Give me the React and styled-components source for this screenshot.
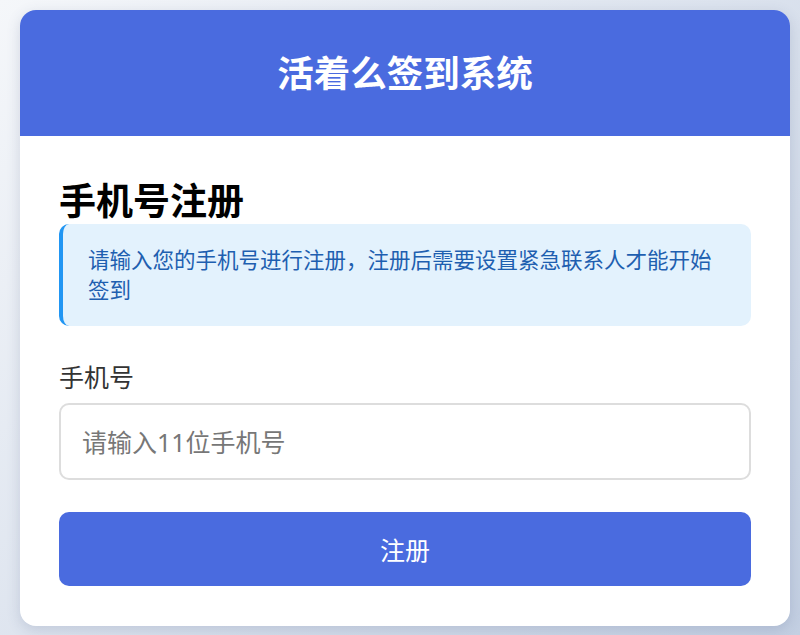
import styled, { createGlobalStyle } from 'styled-components'

const GlobalStyle = createGlobalStyle`
html, body {
  margin: 0;
  padding: 0;
  min-height: 100%;
}
body {
  font-family: "Noto Sans", "Noto Sans CJK SC", sans-serif;
  background: linear-gradient(135deg, #f5f7fa 0%, #c3cfe2 100%);
  min-height: 635px;
}
* { box-sizing: border-box; }
`

const Page = styled.div`
padding: 10px 10px 9px 20px;
`

const Card = styled.div`
width: 770px;
background: #fff;
border-radius: 16px;
overflow: hidden;
box-shadow: 0 4px 14px rgba(60, 80, 120, 0.18);
`

const Header = styled.header`
height: 126px;
background: #4a6bdf;
display: flex;
align-items: center;
justify-content: center;
`

const Title = styled.h1`
margin: 0;
color: #fff;
font-size: 36.5px;
font-weight: 700;
line-height: 1;
`

const Body = styled.div`
padding: 41px 39px 40px;
display: flex;
flex-direction: column;
`

const Heading = styled.h2`
margin: 0;
font-size: 37px;
font-weight: 700;
line-height: 47px;
color: #000;
`

const Notice = styled.div`
background: #e3f2fd;
border-left: 4px solid #2196f3;
border-radius: 10px;
padding: 21px 30px 21px 25px;
color: #1e5fb0;
font-size: 21.5px;
line-height: 30px;
`

const Field = styled.div`
margin-top: 35px;
display: flex;
flex-direction: column;
gap: 10px;
`

const Label = styled.label`
font-size: 25px;
line-height: 32px;
color: #333;
`

const Input = styled.input`
height: 77px;
border: 2px solid #ddd;
border-radius: 10px;
padding: 0 21px;
font-size: 25px;
font-family: inherit;
color: #333;
outline: none;
&::placeholder {
  color: #777;
}
`

const Button = styled.button`
margin-top: 32px;
height: 74px;
border: none;
border-radius: 10px;
background: #4a6bdf;
color: #fff;
font-size: 25px;
font-family: inherit;
cursor: pointer;
`

export default function App() {
  return (
    <>
      <GlobalStyle />
      <Page>
        <Card>
          <Header>
            <Title>活着么签到系统</Title>
          </Header>
          <Body>
            <Heading>手机号注册</Heading>
            <Notice>请输入您的手机号进行注册，注册后需要设置紧急联系人才能开始签到</Notice>
            <Field>
              <Label htmlFor="phone">手机号</Label>
              <Input id="phone" type="tel" placeholder="请输入11位手机号" />
            </Field>
            <Button>注册</Button>
          </Body>
        </Card>
      </Page>
    </>
  )
}
